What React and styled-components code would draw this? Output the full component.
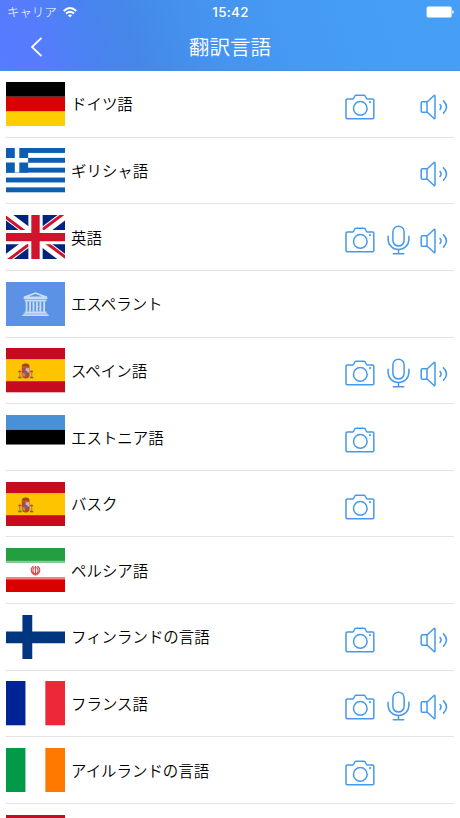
import React from 'react';
import styled, { createGlobalStyle } from 'styled-components';

const GlobalStyle = createGlobalStyle`
  * { box-sizing: border-box; }
  body { margin: 0; background: #fff; overflow: hidden; }
`;

const Screen = styled.main`
  width: 460px;
  height: 818px;
  overflow: hidden;
  background: #fff;
  font-family: "Noto Sans CJK JP", sans-serif;
`;

const Header = styled.header`
  height: 71px;
  color: #fff;
  background: linear-gradient(73deg, #587bff 0%, #567cfd 9%, #4b82f2 19%, #4588e8 30%, #4592ee 43%, #4599f2 60%, #469ef4 80%, #469ff4 100%);
  border-bottom: 1px solid #4590e4;
`;

const StatusBar = styled.div`
  height: 24px;
  display: grid;
  grid-template-columns: 1fr auto 1fr;
  align-items: center;
  padding: 0 6px 0 7px;
`;

const Carrier = styled.div`
  display: flex;
  align-items: center;
  gap: 6px;
  font-size: 12.4px;
  line-height: 24px;
  font-weight: 300;
`;

const Clock = styled.time`
  font: 500 13.4px/24px Inter, sans-serif;
  letter-spacing: 0.3px;
`;

const BatterySlot = styled.div`
  display: flex;
  justify-content: flex-end;
`;

const NavBar = styled.div`
  height: 46px;
  display: grid;
  grid-template-columns: 60px 1fr 60px;
  align-items: center;
`;

const BackButton = styled.button`
  padding: 0 0 0 30px;
  border: 0;
  background: none;
  color: inherit;
  display: flex;
`;

const Title = styled.h1`
  margin: 0;
  padding-bottom: 2px;
  text-align: center;
  font-size: 20.6px;
  line-height: 42px;
  font-weight: 350;
`;

const List = styled.ul`
  margin: 0;
  padding: 0 6px;
  list-style: none;
`;

const Row = styled.li`
  height: 66.65px;
  display: grid;
  grid-template-columns: 59px 1fr 30px 22px 28px;
  align-items: center;
  border-bottom: 1px solid #e2e3e3;
`;

const FlagBox = styled.svg`
  display: block;
  width: 59px;
  height: 44.3px;
`;

const Label = styled.span`
  padding: 0 0 1px 6px;
  font-size: 15.45px;
  line-height: 24px;
  font-weight: 350;
  color: #000;
  white-space: nowrap;
`;

const IconCell = styled.span`
  display: flex;
  padding-top: ${({ $drop }) => $drop}px;
  margin-left: ${({ $shift }) => $shift}px;
`;

const LineIcon = styled.svg`
  display: block;
  flex: none;
  fill: none;
  stroke: #4499ec;
  stroke-width: 1.5;
  stroke-linecap: round;
  stroke-linejoin: round;
`;

const Camera = () => (
  <LineIcon width="30" height="26" viewBox="0 0 30 26">
    <path d="M2 5H7.6C9.4 5 9 1.3 11 1.3H19C21 1.3 20.6 5 22.4 5H27.6Q28.8 5 28.8 6.2V23.5Q28.8 24.7 27.6 24.7H2.2Q1 24.7 1 23.5V6.2Q1 5 2.2 5Z" />
    <circle cx="15.3" cy="14.4" r="6.8" />
    <circle cx="25" cy="8.2" r="0.4" />
  </LineIcon>
);

const Mic = () => (
  <LineIcon width="23" height="30" viewBox="0 0 23 30">
    <rect x="5.9" y="1.2" width="11.2" height="19.8" rx="5.6" />
    <path d="M1.1 11.2V14.2A10.4 10.4 0 0 0 21.9 14.2V11.2M11.5 24.7V28.6M6.3 28.7H16.7" />
  </LineIcon>
);

const Speaker = () => (
  <LineIcon width="28" height="26" viewBox="0 0 28 26">
    <path d="M7 8L13.8 1.7Q15 .8 15 2.2V23.8Q15 25.2 13.8 24.3L7 18M2.4 7.8H7V18.2H2.4Q1.2 18.2 1.2 17V9Q1.2 7.8 2.4 7.8Z" />
    <path d="M20 10.5Q22.2 13 20 15.5M23.5 6.9Q29.5 13 23.5 19.1" />
  </LineIcon>
);

const Stripes = ({ colors, vertical }) => (
  <>
    {colors.map((c, i) => {
      const w = 60 / colors.length;
      const h = 45 / colors.length;
      return vertical
        ? <rect key={i} x={i * w} width={w} height="45" fill={c} />
        : <rect key={i} y={i * h} width="60" height={h} fill={c} />;
    })}
  </>
);

const Spain = () => (
  <>
    <rect width="60" height="45" fill="#c60b1e" />
    <rect y="11.25" width="60" height="22.5" fill="#ffc400" />
    <path d="M14 22V30M26 22V30" stroke="#c48c4a" strokeWidth="1.5" />
    <path d="M12.5 24H15.5M24.5 24H27.5" stroke="#b64e29" strokeWidth="1.4" />
    <path d="M12.4 30H15.8M24.3 30H27.7" stroke="#52746c" strokeWidth="1.6" />
    <path d="M16 19.5Q15.5 16 20 15.5Q24.5 16 24 19.5Z" fill="#ad551e" />
    <path d="M17 17.6H23" stroke="#9b3b18" strokeWidth="1.2" />
    <path d="M16 19.5H24V27.5Q24 31 20 31Q16 31 16 27.5Z" fill="#b5443a" />
    <rect x="20" y="20.5" width="3.8" height="4.4" fill="#d6b0b8" />
    <rect x="16.6" y="25.3" width="3" height="3.8" fill="#d18a25" />
    <ellipse cx="20.2" cy="25" rx="1.7" ry="1.9" fill="#5b6a9b" />
  </>
);

const FLAGS = {
  de: <Stripes colors={['#000', '#dd0000', '#ffce00']} />,
  gr: (
    <>
      <rect width="60" height="45" fill="#fff" />
      {[0, 2, 4, 6, 8].map((n) => <rect key={n} y={n * 5} width="60" height="5" fill="#0d5eaf" />)}
      <rect width="22.5" height="25" fill="#0d5eaf" />
      <path d="M11.25 0V25M0 12.5H22.5" stroke="#fff" strokeWidth="4.6" />
    </>
  ),
  gb: (
    <>
      <rect width="60" height="45" fill="#00247d" />
      <path d="M0 0L60 45M60 0L0 45" stroke="#fff" strokeWidth="9" />
      <path d="M-1.3 1.4L28.7 23.9M31.3 21.1L61.3 43.6M58.7 -1.4L28.7 21.1M31.3 23.9L1.3 46.4" stroke="#cf142b" strokeWidth="3" />
      <path d="M30 0V45M0 22.5H60" stroke="#fff" strokeWidth="14.5" />
      <path d="M30 0V45M0 22.5H60" stroke="#cf142b" strokeWidth="8.5" />
    </>
  ),
  un: (
    <>
      <rect width="60" height="45" fill="#5b92e5" />
      <g fill="#dceafb" opacity="0.85">
        <path fillRule="evenodd" d="M30 10.5L42 14.8V17.4H18V14.8ZM30 12.1L23.2 14.8H36.8Z" />
        <path d="M19 18H41V19.8H19ZM19 30H41V31.4H19ZM17.8 31.8H42.2V32.9H17.8ZM16.5 33.3H43.5V34.6H16.5Z" />
        {[20, 23.5, 27, 30.5, 34, 37.8].map((x) => <rect key={x} x={x} y="19.8" width="1.9" height="10.4" />)}
        <path d="M27.5 22L29 24M30.5 27L33 24.5M34 28L36 26" stroke="#dceafb" strokeWidth="1" />
      </g>
    </>
  ),
  es: <Spain />,
  ee: (
    <>
      <rect width="60" height="15" fill="#4891d9" />
      <rect y="15" width="60" height="15" fill="#000" />
    </>
  ),
  ir: (
    <>
      <Stripes colors={['#239f40', '#fff', '#da0000']} />
      <rect y="13" width="60" height="1.8" fill="#88c995" />
      <rect y="30.2" width="60" height="1.8" fill="#ef8282" />
      <path d="M28 18.5C24 21 25.5 26.3 30 27.5C34.5 26.3 36 21 32 18.5M28.8 19.5C26.5 22 27.3 25 29.2 26.6M31.2 19.5C33.5 22 32.7 25 30.8 26.6M30 18.2V27.8" fill="none" stroke="#df4345" strokeWidth="1.15" />
    </>
  ),
  fi: (
    <>
      <rect width="60" height="45" fill="#fff" />
      <path d="M16.7 0H26.7V45H16.7ZM0 16.7H60V28.8H0Z" fill="#003580" />
    </>
  ),
  fr: <Stripes vertical colors={['#002395', '#fff', '#ed2939']} />,
  ie: <Stripes vertical colors={['#009a49', '#fff', '#ff7900']} />,
  red: <rect width="60" height="45" fill="#c30d20" />,
};

const Flag = ({ code }) => (
  <FlagBox viewBox="0 0 60 45" preserveAspectRatio="none">{FLAGS[code]}</FlagBox>
);

const LANGUAGES = [
  { name: 'ドイツ語', flag: 'de', camera: true, speaker: true },
  { name: 'ギリシャ語', flag: 'gr', speaker: true },
  { name: '英語', flag: 'gb', camera: true, mic: true, speaker: true },
  { name: 'エスペラント', flag: 'un' },
  { name: 'スペイン語', flag: 'es', camera: true, mic: true, speaker: true },
  { name: 'エストニア語', flag: 'ee', camera: true },
  { name: 'バスク', flag: 'es', camera: true },
  { name: 'ペルシア語', flag: 'ir' },
  { name: 'フィンランドの言語', flag: 'fi', camera: true, speaker: true },
  { name: 'フランス語', flag: 'fr', camera: true, mic: true, speaker: true },
  { name: 'アイルランドの言語', flag: 'ie', camera: true },
  { name: '', flag: 'red' },
];

const LanguageRow = ({ item }) => (
  <Row>
    <Flag code={item.flag} />
    <Label>{item.name}</Label>
    <IconCell $drop={6} $shift={-29}>{item.camera && <Camera />}</IconCell>
    <IconCell $drop={5} $shift={-17.3}>{item.mic && <Mic />}</IconCell>
    <IconCell $drop={7} $shift={-6}>{item.speaker && <Speaker />}</IconCell>
  </Row>
);

export default function App() {
  return (
    <Screen>
      <GlobalStyle />
      <Header>
        <StatusBar>
          <Carrier>
            キャリア
            <svg width="14" height="11" viewBox="0 0 14 11" fill="none" stroke="#fff" strokeWidth="1.9">
              <path d="M.7 4Q7-1.8 13.3 4M3 6.5Q7 2.9 11 6.5" />
              <path d="M4.9 8.3Q7 6.5 9.1 8.3L7 10.5Z" fill="#fff" stroke="none" />
            </svg>
          </Carrier>
          <Clock>15:42</Clock>
          <BatterySlot>
            <svg width="28" height="12" viewBox="0 0 28 12" fill="#fff">
              <rect x=".6" y=".6" width="25" height="10.8" rx="1.5" />
              <path d="M26.3 4Q27.8 4.4 27.8 6T26.3 8Z" />
            </svg>
          </BatterySlot>
        </StatusBar>
        <NavBar>
          <BackButton aria-label="戻る">
            <svg width="13" height="20" viewBox="0 0 13 20" fill="none" stroke="#fff" strokeWidth="1.8">
              <path d="M11.5 .8L2 10L11.5 19.2" />
            </svg>
          </BackButton>
          <Title>翻訳言語</Title>
        </NavBar>
      </Header>
      <List>
        {LANGUAGES.map((item) => <LanguageRow key={item.name} item={item} />)}
      </List>
    </Screen>
  );
}
